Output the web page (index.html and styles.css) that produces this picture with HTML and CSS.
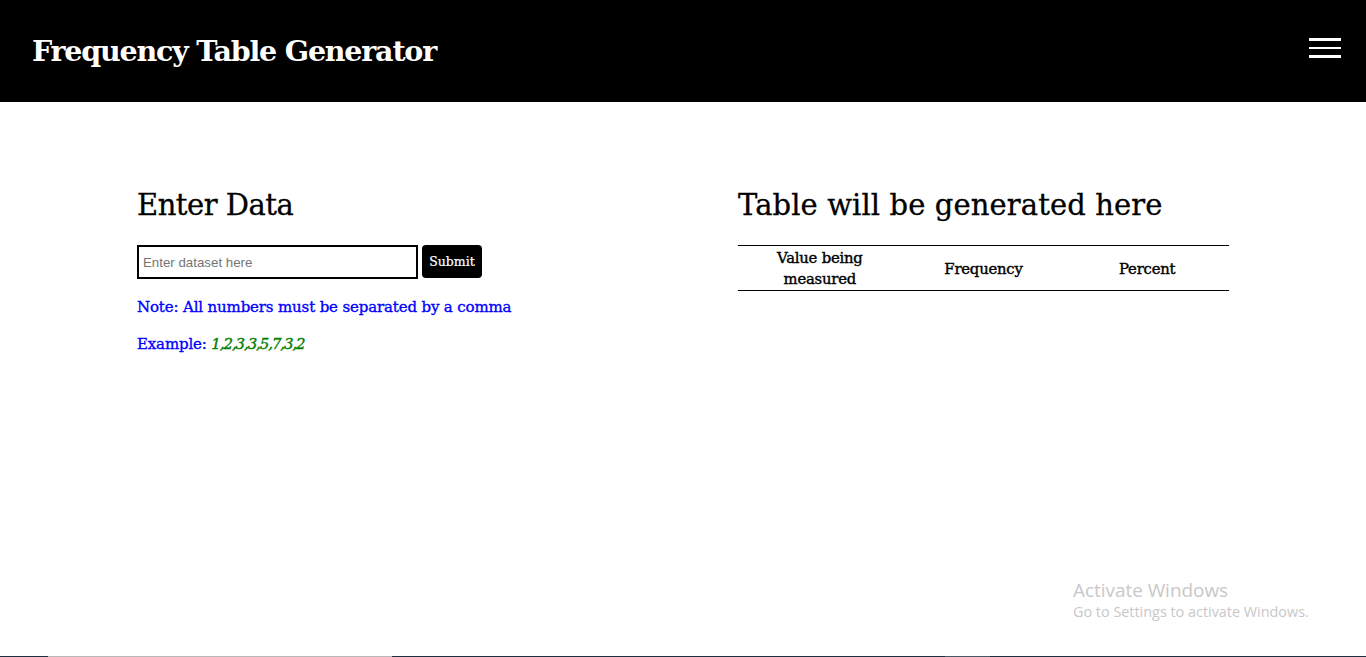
FILE: index.html
```html
<!DOCTYPE html>
<html>
<head>
<meta charset="utf-8">
<link rel="stylesheet" href="styles.css">
</head>
<body>
<header class="topbar">
  <h1 class="brand">Frequency Table Generator</h1>
  <div class="burger"><span></span><span></span><span></span></div>
</header>
<main class="main">
  <section class="left">
    <h2 class="title">Enter Data</h2>
    <form class="entry">
      <input class="field" type="text" placeholder="Enter dataset here">
      <button class="submit" type="button">Submit</button>
    </form>
    <p class="note">Note: All numbers must be separated by a comma</p>
    <p class="note">Example: <em class="sample">1,2,3,3,5,7,3,2</em></p>
  </section>
  <section class="right">
    <h2 class="title">Table will be generated here</h2>
    <table class="freq">
      <thead>
        <tr><th>Value being<br>measured</th><th>Frequency</th><th>Percent</th></tr>
      </thead>
    </table>
  </section>
</main>
<div class="watermark">
  <div class="wm1">Activate Windows</div>
  <div class="wm2">Go to Settings to activate Windows.</div>
</div>
<div class="taskbar">
  <span class="tb a"></span><span class="tb b"></span><span class="tb c"></span><span class="tb d"></span><span class="tb e"></span>
</div>
</body>
</html>
```
FILE: styles.css
```css
html, body { margin: 0; padding: 0; }
body {
  font-family: "DejaVu Serif", serif;
  background: #fff;
  color: #000;
  height: 657px;
  overflow: hidden;
  position: relative;
}
.topbar {
  height: 102px;
  background: #000;
  display: flex;
  align-items: center;
  justify-content: space-between;
  padding: 0 25px 0 32px;
}
.brand {
  margin: 0;
  color: #fff;
  font-size: 28.5px;
  font-weight: bold;
  letter-spacing: -1.2px;
}
.burger {
  width: 32px;
  display: flex;
  flex-direction: column;
  gap: 6px;
  margin-bottom: 6px;
}
.burger span { display: block; height: 2.5px; background: #fff; }
.main {
  display: flex;
  padding: 83px 0 0 137px;
}
.left { width: 601px; }
.right { width: 491px; }
.title {
  margin: 0 0 20px;
  font-size: 29px;
  font-weight: normal;
  line-height: 40px;
  -webkit-text-stroke: 0.3px #000;
}
.left .title { letter-spacing: -0.5px; }
.right .title { letter-spacing: 0.1px; }
.entry { display: flex; gap: 4px; margin: 0; }
.field {
  box-sizing: border-box;
  width: 281px;
  height: 34px;
  border: 2px solid #000;
  padding: 0 4px;
  font-family: "Liberation Sans", Arial, sans-serif;
  font-size: 13.3px;
  outline: none;
}
.field::placeholder { color: #757575; }
.submit {
  height: 33px;
  width: 60px;
  background: #000;
  color: #fff;
  border: none;
  border-radius: 4px;
  font-family: "DejaVu Serif", serif;
  font-size: 12.5px;
  padding: 0;
  -webkit-text-stroke: 0.2px #fff;
}
.note {
  color: #0000ff;
  font-size: 15px;
  margin: 18px 0 0;
  line-height: 20px;
  letter-spacing: -0.15px;
  -webkit-text-stroke: 0.35px #0000ff;
}
.note + .note { margin-top: 17px; }
.sample {
  color: #008000;
  font-style: italic;
  letter-spacing: -1.1px;
  -webkit-text-stroke: 0.35px #008000;
}
.freq {
  width: 491px;
  border-collapse: collapse;
  border-top: 1px solid #000;
  border-bottom: 1px solid #000;
}
.freq th {
  width: 33.33%;
  font-size: 14.8px;
  font-weight: normal;
  line-height: 21px;
  padding: 1px 0 1px;
  letter-spacing: -0.2px;
  -webkit-text-stroke: 0.4px #000;
}
.watermark {
  position: absolute;
  left: 1073px;
  top: 578px;
  color: #c8c8c8;
  font-family: "Open Sans", "Noto Sans", sans-serif;
}
.wm1 { font-size: 18.9px; line-height: 24px; }
.wm2 { font-size: 14.4px; line-height: 20px; }
.taskbar {
  position: absolute;
  left: 0; right: 0; bottom: 0;
  height: 1px;
  display: flex;
}
.tb { display: block; height: 1px; }
.tb.a { width: 48px; background: #1e3040; }
.tb.b { width: 344px; background: #b8b8b8; }
.tb.c { width: 553px; background: #1e3040; }
.tb.d { width: 45px; background: #4a5866; }
.tb.e { flex: 1; background: #1e3040; }
```
